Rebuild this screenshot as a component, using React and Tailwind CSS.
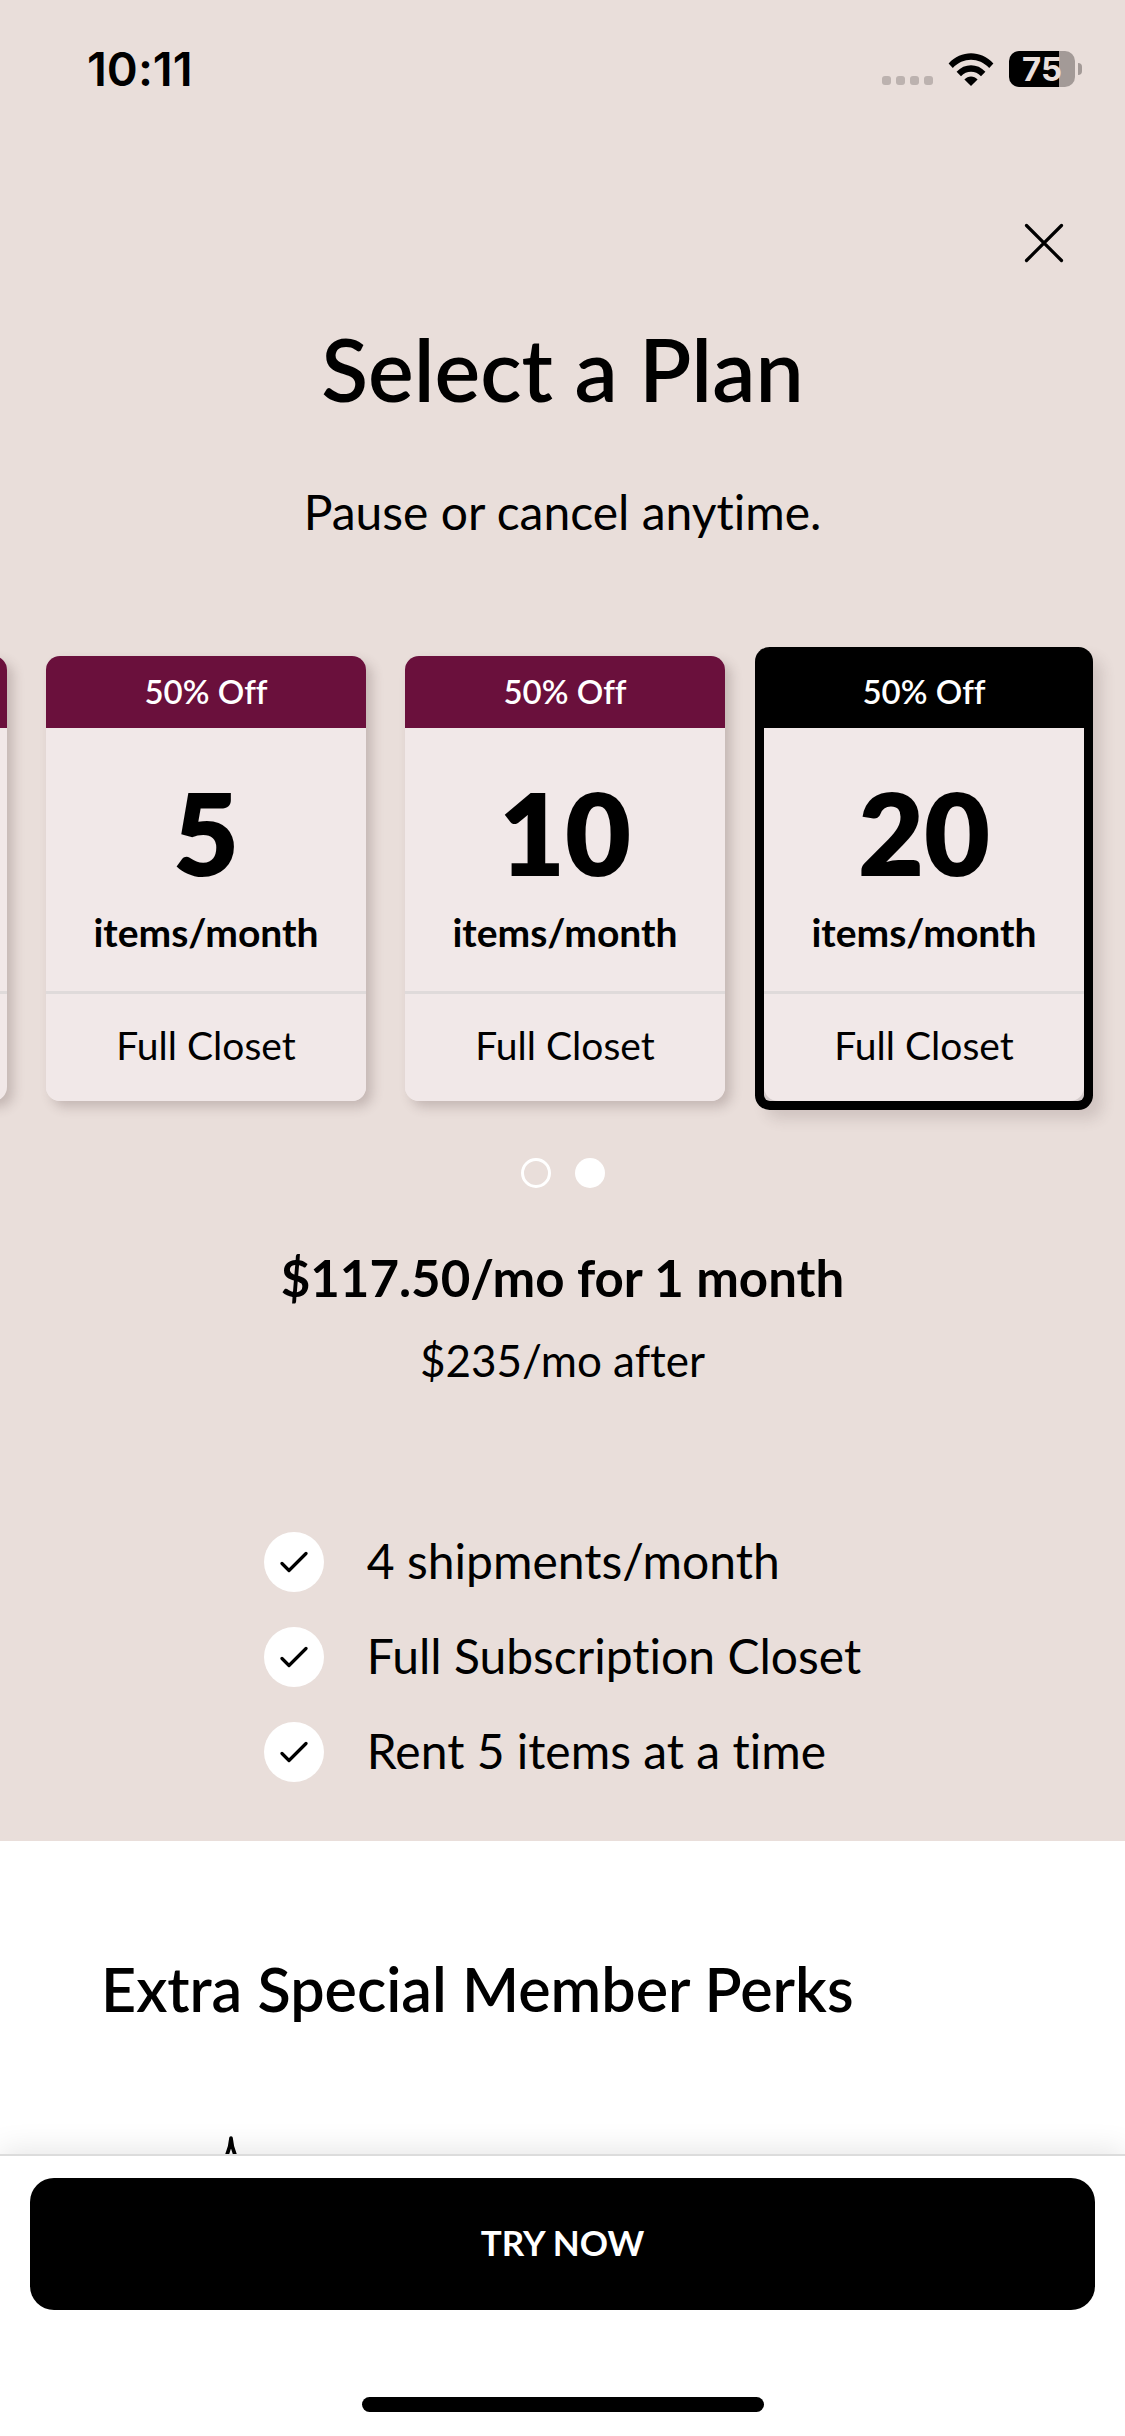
import React from "react";

const PLANS = [
  { items: 5, selected: false },
  { items: 10, selected: false },
  { items: 20, selected: true },
];

const FEATURES = ["4 shipments/month", "Full Subscription Closet", "Rent 5 items at a time"];

function StatusBar() {
  return (
    <div className="flex h-[138px] items-center justify-between pr-[43px] pl-[87px]">
      <span className="font-['Inter',sans-serif] text-[47px] leading-[56px] font-semibold">10:11</span>
      <div className="flex items-center">
        <div className="mt-[22px] mr-[15px] flex gap-[5px]">
          {[0, 1, 2, 3].map((i) => (
            <span key={i} className="size-[9px] rounded-[3px] bg-[#bcb2af]" />
          ))}
        </div>
        <svg width="46" height="33" viewBox="0 0 46 33" className="mr-[15px]" aria-label="Wi-Fi">
          <path d="M0.6 10.6C13-3.1 33-3.1 45.4 10.6L41.2 15C31 4 15 4 4.8 15Z" />
          <path d="M8.6 18.8C16.6 10.2 29.4 10.2 37.4 18.8L33 23.2C27.4 17.4 18.6 17.4 13 23.2Z" />
          <path d="M16.4 26.4C20 22.4 26 22.4 29.6 26.4L23 33Z" />
        </svg>
        <div className="flex items-center gap-[3px]">
          <div className="flex h-9 w-[66px] items-center justify-center rounded-[10px] bg-[linear-gradient(90deg,#000_76%,#a39a97_76%)]">
            <span className="font-['Inter',sans-serif] text-[33px] leading-9 font-bold text-[#e9deda]">75</span>
          </div>
          <span className="h-3 w-1 rounded-r-full bg-[#a39a97]" />
        </div>
      </div>
    </div>
  );
}

/* Edge of the neighbouring plan that peeks in while the carousel is on its last page. */
function PeekCard() {
  return (
    <div
      aria-hidden="true"
      className="flex w-80 shrink-0 flex-col overflow-hidden rounded-[14px] bg-[#f1e8e8] shadow-[6px_6px_12px_rgba(80,60,60,0.24)]"
    >
      <div className="h-[72px] bg-[#6a103c]" />
      <div className="flex-1" />
      <div className="h-[110px] border-t-[3px] border-[#dfdada]" />
    </div>
  );
}

function PlanCard({ items, selected }) {
  return (
    <button
      type="button"
      aria-pressed={selected}
      className={
        "flex w-80 shrink-0 flex-col text-center " +
        (selected
          ? "rounded-[6px] bg-[#d5cccc] shadow-[0_0_0_9px_#000,10px_10px_14px_8px_rgba(80,60,60,0.16)]"
          : "rounded-[14px] bg-[#f1e8e8] shadow-[6px_6px_12px_rgba(80,60,60,0.24)]")
      }
    >
      <span
        className={
          "w-full pt-[15px] pb-[17px] text-[33px] leading-10 font-semibold text-white " +
          (selected ? "bg-black" : "rounded-t-[14px] bg-[#6a103c]")
        }
      >
        50% Off
      </span>
      <span className="flex w-full flex-col bg-[#f1e8e8] pt-[48px] pb-[35px]">
        <span className="text-[114px] leading-[112px] font-extrabold">{items}</span>
        <span className="mt-5 text-[39px] leading-[48px] font-bold">items/month</span>
      </span>
      <span className="w-full rounded-b-[14px] border-t-[3px] border-[#dfdada] bg-[#f1e8e8] pt-[27px] pb-[32px] text-[39px] leading-[48px]">
        Full Closet
      </span>
    </button>
  );
}

function Feature({ children }) {
  return (
    <li className="flex items-center gap-[43px]">
      <span className="flex size-[60px] items-center justify-center rounded-full bg-white">
        <svg width="28" height="22" viewBox="0 0 28 22" fill="none" stroke="#000" strokeWidth="3.2" strokeLinecap="round" strokeLinejoin="round">
          <path d="M2 12.5L9 19.5L26 2.5" />
        </svg>
      </span>
      <span className="pb-0.5 text-[48px] leading-[58px]">{children}</span>
    </li>
  );
}

export default function App() {
  return (
    <div className="flex h-screen flex-col bg-white font-['Lato',sans-serif] text-black [font-variant-ligatures:none]">
      <main className="min-h-0 flex-1 overflow-hidden">
        <section className="bg-[#e9deda] pb-[59px]">
          <StatusBar />
          <div className="flex justify-end pt-[75px] pr-[51px]">
            <button type="button" aria-label="Close" className="flex size-[60px] items-center justify-center">
              <svg width="40" height="40" viewBox="0 0 40 40" stroke="#000" strokeWidth="3.2" strokeLinecap="round">
                <path d="M2.5 2.5L37.5 37.5M37.5 2.5L2.5 37.5" />
              </svg>
            </button>
          </div>
          <h1 className="mt-[46px] text-center text-[86px] leading-[100px] font-semibold">Select a Plan</h1>
          <p className="mt-[63px] text-center text-[48px] leading-[60px]">Pause or cancel anytime.</p>
          <div className="mt-[81px] flex justify-end gap-[39px] overflow-hidden pt-[33px] pr-[41px] pb-[47px]">
            <PeekCard />
            {PLANS.map((plan) => (
              <PlanCard key={plan.items} {...plan} />
            ))}
          </div>
          <div className="mt-[10px] flex justify-center gap-6">
            <button type="button" aria-label="Page 1" className="size-[30px] rounded-full border-[3px] border-white" />
            <button type="button" aria-label="Page 2" className="size-[30px] rounded-full bg-white" />
          </div>
          <p className="mt-[54px] text-center text-[51px] leading-[72px] font-bold">$117.50/mo for 1 month</p>
          <p className="mt-4 text-center text-[44px] leading-[60px]">$235/mo after</p>
          <ul className="mx-auto mt-[142px] flex w-fit flex-col gap-[35px]">
            {FEATURES.map((f) => (
              <Feature key={f}>{f}</Feature>
            ))}
          </ul>
        </section>
        <section className="px-[101px] pt-[110px]">
          <h2 className="text-[61px] leading-[76px] font-semibold">Extra Special Member Perks</h2>
          <svg width="60" height="76" viewBox="0 0 60 76" className="mt-[109px] ml-[100px]" fill="none" stroke="#000" strokeWidth="3.6" strokeLinejoin="round">
            <path d="M30 2C31 14 35 32 58 38C38 42 32 56 30 74C28 56 22 42 2 38C25 32 29 14 30 2Z" />
          </svg>
        </section>
      </main>
      <footer className="relative border-t-2 border-[#dcdcdc] bg-white px-[30px] pt-[22px] pb-6 shadow-[0_-4px_28px_rgba(0,0,0,0.1)]">
        <button type="button" className="h-[132px] w-full rounded-3xl bg-black pb-1 text-[35px] leading-10 font-bold text-white">
          TRY NOW
        </button>
        <div className="mx-auto mt-[87px] h-[15px] w-[402px] rounded-full bg-black" />
      </footer>
    </div>
  );
}
